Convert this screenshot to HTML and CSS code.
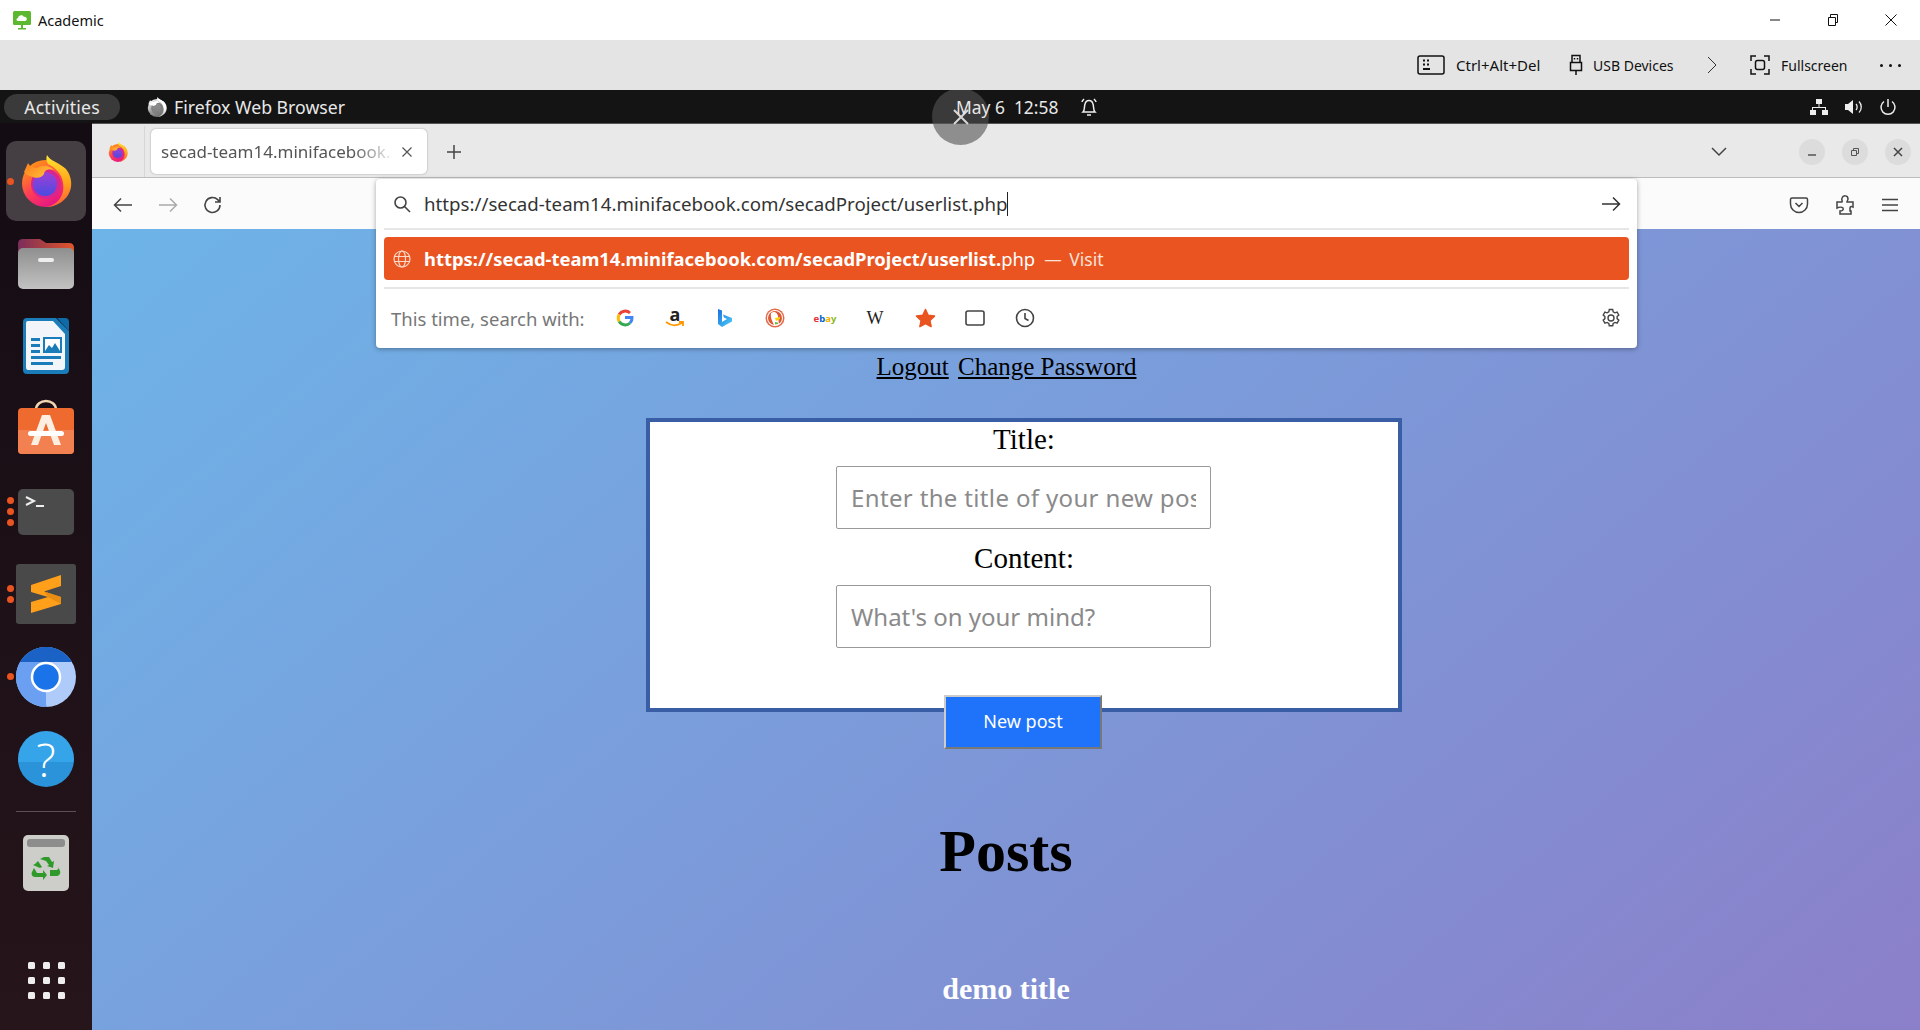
FILE: index.html
```html
<!DOCTYPE html>
<html lang="en">
<head>
    <meta charset="UTF-8">
    <meta name="viewport" content="width=device-width, initial-scale=1.0">
    <title>Academic</title>
    <link rel="stylesheet" href="styles.css">
</head>
<body>
    <!-- shared logo -->
    <svg class="defs" width="0" height="0" aria-hidden="true">
        <defs>
            <linearGradient id="ffBody" x1="0.1" y1="0.2" x2="0.6" y2="1">
                <stop offset="0" stop-color="#ff8a1c"/>
                <stop offset="0.5" stop-color="#ff3d55"/>
                <stop offset="1" stop-color="#e31587"/>
            </linearGradient>
            <linearGradient id="ffTail" x1="0.5" y1="0" x2="0.6" y2="1">
                <stop offset="0" stop-color="#ffe02e"/>
                <stop offset="0.55" stop-color="#ffa51c"/>
                <stop offset="1" stop-color="#ff5a3c"/>
            </linearGradient>
            <linearGradient id="ffGlobe" x1="0.5" y1="0" x2="0.5" y2="1">
                <stop offset="0" stop-color="#a03fd6"/>
                <stop offset="1" stop-color="#4a4be0"/>
            </linearGradient>
            <linearGradient id="ffHead" x1="0" y1="0" x2="1" y2="0.6">
                <stop offset="0" stop-color="#ff7a1c"/>
                <stop offset="1" stop-color="#ffc13a"/>
            </linearGradient>
            <symbol id="firefox" viewBox="0 0 52 52">
                <circle cx="25.500" cy="28.500" r="23.500" fill="url(#ffBody)"/>
                <path fill="url(#ffTail)" d="M27 0c3 6 13 8 19 14 4 5 6 12 5 18-2 12-13 20-25 20 12-2 19-12 17-24-1-10-9-16-15-19-2-3-2-6-1-9z"/>
                <circle cx="26" cy="29" r="15" fill="#d9258f"/>
                <circle cx="25" cy="29" r="12" fill="url(#ffGlobe)"/>
                <path fill="url(#ffHead)" d="M4 17l4-9c2 4 6 5 9 5 6-4 13-2 17 2-6-2-10 1-10 4-2 4-8 5-14 2-2-1-5-2-6-4z"/>
            </symbol>
        </defs>
    </svg>

    <!-- host window title -->
    <header class="titlebar">
        <div class="app-name">
            <svg class="app-icon" width="20" height="20" viewBox="0 0 20 20">
                <rect x="1" y="1" width="18" height="14" rx="1.500" fill="#5cb82e"/>
                <path fill="#fff" d="M6 11c-2 0-2-3 0-3 0-3 5-4 6-1 3-1 4 4 1 4z"/>
                <rect x="9" y="15" width="2" height="3" fill="#5cb82e"/>
                <rect x="6" y="18" width="8" height="1.500" fill="#5cb82e"/>
            </svg>
            <span>Academic</span>
        </div>
        <div class="window-controls">
            <svg width="14" height="14" viewBox="0 0 14 14"><path d="M2 7h10" stroke="#111" fill="none"/></svg>
            <svg width="14" height="14" viewBox="0 0 14 14"><path d="M2.500 4.500h7v8h-7zM4.500 4.500v-3h7v8h-2" stroke="#111" fill="none"/></svg>
            <svg width="14" height="14" viewBox="0 0 14 14"><path d="M1.500 1.500l11 11M12.500 1.500l-11 11" stroke="#111" fill="none"/></svg>
        </div>
    </header>

    <!-- host tools -->
    <div class="vm-toolbar">
        <div class="vm-tool vm-keys">
            <svg width="28" height="20" viewBox="0 0 28 20" fill="none" stroke="#111" stroke-width="1.500">
                <rect x="1" y="1" width="26" height="18" rx="2"/>
                <path d="M6 5.500h2M10 5.500h2M6 9.500h2M10 9.500h2M6 14h7" stroke-width="2"/>
            </svg>
            <span>Ctrl+Alt+Del</span>
        </div>
        <div class="vm-tool vm-usb">
            <svg width="14" height="22" viewBox="0 0 14 22" fill="none" stroke="#111" stroke-width="1.500">
                <path d="M3 1.500h8v7H3zM1.500 8.500h11v8h-11zM7 17v4"/>
                <path d="M5.500 4v1.500M8.500 4v1.500"/>
            </svg>
            <span>USB Devices</span>
        </div>
        <svg class="vm-more" width="12" height="18" viewBox="0 0 12 18"><path d="M2 1l8 8-8 8" stroke="#333" fill="none"/></svg>
        <div class="vm-tool vm-full">
            <svg width="20" height="20" viewBox="0 0 20 20" fill="none" stroke="#111" stroke-width="1.500">
                <path d="M1 6V1h5M14 1h5v5M19 14v5h-5M6 19H1v-5"/>
                <rect x="5.500" y="5.500" width="9" height="9" rx="2"/>
            </svg>
            <span>Fullscreen</span>
        </div>
        <div class="vm-dots"><i></i><i></i><i></i></div>
    </div>

    <div class="desktop">
        <!-- guest top bar -->
        <div class="topbar">
            <div class="topbar-left">
                <span class="activities">Activities</span>
                <svg class="topbar-ff" width="20" height="20"><use href="#firefox"/></svg>
                <span class="topbar-app">Firefox Web Browser</span>
            </div>
            <div class="clock">
                <span>May 6&nbsp;&nbsp;12:58</span>
                <svg width="18" height="20" viewBox="0 0 18 20" fill="none" stroke="#eee" stroke-width="1.500">
                    <path d="M3 15c2-2 1-5 2-8 .5-2 2-3.500 4-3.500s3.500 1.500 4 3.500c1 3 0 6 2 8z"/>
                    <path d="M2 5c0-1 1-2 2-3M16 5c0-1-1-2-2-3M7 18h4" />
                </svg>
            </div>
            <div class="tray">
                <svg width="20" height="18" viewBox="0 0 20 18" fill="#eee">
                    <rect x="7" y="1" width="6" height="5"/><rect x="1" y="12" width="6" height="5"/><rect x="13" y="12" width="6" height="5"/>
                    <path d="M9.500 6h1v3H17v3h-1v-2H4v2H3V9h6.500z"/>
                </svg>
                <svg width="20" height="18" viewBox="0 0 20 18">
                    <path fill="#eee" d="M1 6h3l5-4v14l-5-4H1z"/>
                    <path d="M12 6c1.500 1.500 1.500 4.500 0 6M15 3.500c3 3 3 8 0 11" stroke="#eee" stroke-width="1.300" fill="none"/>
                </svg>
                <svg width="18" height="18" viewBox="0 0 18 18" fill="none" stroke="#eee" stroke-width="1.500">
                    <path d="M9 1v8M5 3.500a7 7 0 1 0 8 0"/>
                </svg>
            </div>
        </div>

        <div class="workspace">
            <!-- guest dock -->
            <nav class="dock">
                <div class="dock-item dock-active">
                    <span class="run-dots"><i></i></span>
                    <svg width="52" height="52"><use href="#firefox"/></svg>
                </div>
                <div class="dock-item">
                    <svg width="56" height="52" viewBox="0 0 56 52">
                        <defs>
                            <linearGradient id="folderTop" x1="0" y1="0" x2="1" y2="0">
                                <stop offset="0" stop-color="#7a2d5a"/>
                                <stop offset="1" stop-color="#e2562a"/>
                            </linearGradient>
                            <linearGradient id="folderFront" x1="0" y1="0" x2="0" y2="1">
                                <stop offset="0" stop-color="#8f8f8f"/>
                                <stop offset="1" stop-color="#c2c2c2"/>
                            </linearGradient>
                        </defs>
                        <path fill="url(#folderTop)" d="M0 6q0-5 5-5h17l6 4h23q5 0 5 5v12H0z"/>
                        <rect y="10" width="56" height="41" rx="5" fill="url(#folderFront)"/>
                        <rect x="20" y="20" width="16" height="4" rx="2" fill="#eee"/>
                    </svg>
                </div>
                <div class="dock-item">
                    <svg width="46" height="56" viewBox="0 0 46 56">
                        <path fill="#1a7cb8" d="M4 0h29l13 13v39q0 4-4 4H4q-4 0-4-4V4q0-4 4-4z"/>
                        <path fill="#f2f6fa" d="M5 3h25l12 13v33q0 3-3 3H5q-2 0-2-3V5q0-2 2-2z"/>
                        <path fill="#0f6aa8" d="M34 0h8q4 0 4 4v9z"/>
                        <path fill="#1a7cb8" d="M8 20h9v3H8zM8 26h9v3H8zM8 32h9v3H8zM8 38h30v3H8zM8 44h22v3H8z"/>
                        <rect x="21" y="20" width="17" height="14" fill="#fff" stroke="#1a7cb8" stroke-width="2"/>
                        <path fill="#1a7cb8" d="M22 33l4-6 3 3 3-5 5 8z"/>
                    </svg>
                </div>
                <div class="dock-item dock-store">
                    <svg width="56" height="56" viewBox="0 0 56 56">
                        <path d="M18 11c0-12 20-12 20 0" stroke="#f2d5b0" stroke-width="2.500" fill="none"/>
                        <rect y="9" width="56" height="46" rx="4" fill="#ee6a2f"/>
                        <path fill="#f28050" d="M0 31h56v20q0 4-4 4H4q-4 0-4-4z"/>
                        <path fill="#fdeee2" d="M24 16h8l11 30h-7l-8-22-8 22h-7z"/>
                        <rect x="10" y="32" width="36" height="5" rx="2.500" fill="#fff"/>
                    </svg>
                </div>
                <div class="dock-item">
                    <span class="run-dots"><i></i><i></i><i></i></span>
                    <svg width="56" height="46" viewBox="0 0 56 46">
                        <rect width="56" height="46" rx="5" fill="#4b4b4b"/>
                        <path d="M8 8l8 4-8 4" stroke="#eee" stroke-width="2" fill="none"/>
                        <path d="M18 17h8" stroke="#eee" stroke-width="2"/>
                    </svg>
                </div>
                <div class="dock-item">
                    <span class="run-dots"><i></i><i></i></span>
                    <svg width="60" height="60" viewBox="0 0 60 60">
                        <rect width="60" height="60" rx="3" fill="#494949"/>
                        <path fill="#ff9f1a" d="M15 21L45 11V22L28 27.500 45 33V40L15 49V38L32 33 15 28z"/>
                        <path fill="#e88c14" d="M28 27.500L45 33V40L32 33z"/>
                    </svg>
                </div>
                <div class="dock-item">
                    <span class="run-dots"><i></i></span>
                    <svg width="60" height="60" viewBox="0 0 60 60">
                        <circle cx="30" cy="30" r="30" fill="#afcbfa"/>
                        <path fill="#1a62c6" d="M4 15A30 30 0 0 1 56 15L30 15z"/>
                        <path fill="#6b9ff2" d="M4 15L30 15 31 60A30 30 0 0 1 4 15z"/>
                        <path fill="#afcbfa" d="M30 30L44 25 30 60z"/>
                        <circle cx="30" cy="30" r="14" fill="#1a73e8" stroke="#fff" stroke-width="2.500"/>
                    </svg>
                </div>
                <div class="dock-item">
                    <span class="help-icon">?</span>
                </div>
                <div class="dock-sep"></div>
                <div class="dock-item dock-trash">
                    <svg width="46" height="56" viewBox="0 0 46 56">
                        <rect width="46" height="56" rx="5" fill="#cdcdc9"/>
                        <rect x="4" y="4" width="38" height="8" rx="3" fill="#8d8d8d"/>
                        <g fill="#2f9a2a">
                            <path d="M17 24l4-2h5l3 5 2-1-1 7-6-2 2-1-3-4-3-1zM15 26l4 6-2 1 0 0-7-3 2-1z"/>
                            <path d="M11 33l3 5h6v-3l4 5-4 5v-3h-8c-3 0-4-3-3-5z"/>
                            <path d="M35 31l2 5c1 2-1 5-3 5h-7v-6h7l2-2z"/>
                        </g>
                    </svg>
                </div>
                <div class="app-grid">
                    <i></i><i></i><i></i><i></i><i></i><i></i><i></i><i></i><i></i>
                </div>
            </nav>

            <!-- firefox window -->
            <div class="browser">
                <div class="tabbar">
                    <div class="tab-favicon">
                        <svg width="20" height="20"><use href="#firefox"/></svg>
                    </div>
                    <div class="tab">
                        <span class="tab-title">secad-team14.minifacebook.</span>
                        <svg width="12" height="12" viewBox="0 0 12 12"><path d="M1.500 1.500l9 9M10.500 1.500l-9 9" stroke="#555" fill="none" stroke-width="1.200"/></svg>
                    </div>
                    <svg class="new-tab" width="16" height="16" viewBox="0 0 16 16"><path d="M8 1v14M1 8h14" stroke="#444" stroke-width="1.500" fill="none"/></svg>
                    <svg class="tab-list" width="16" height="10" viewBox="0 0 16 10"><path d="M1 1l7 7 7-7" stroke="#444" stroke-width="1.500" fill="none"/></svg>
                    <div class="win-buttons">
                        <span class="win-btn"><svg width="10" height="10" viewBox="0 0 10 10"><path d="M1 8h8" stroke="#555" stroke-width="1.500"/></svg></span>
                        <span class="win-btn"><svg width="10" height="10" viewBox="0 0 10 10" fill="none" stroke="#555"><path d="M1.500 3.500h5v5h-5zM3.500 3V1.500h5v5H7"/></svg></span>
                        <span class="win-btn"><svg width="10" height="10" viewBox="0 0 10 10"><path d="M1 1l8 8M9 1l-8 8" stroke="#444" stroke-width="1.500"/></svg></span>
                    </div>
                </div>
                <div class="navbar">
                    <div class="nav-left">
                        <svg width="20" height="16" viewBox="0 0 20 16"><path d="M19 8H2M8 1.500L1.500 8 8 14.500" stroke="#444" stroke-width="1.500" fill="none"/></svg>
                        <svg width="20" height="16" viewBox="0 0 20 16"><path d="M1 8h17M12 1.500L18.500 8 12 14.500" stroke="#aaa" stroke-width="1.500" fill="none"/></svg>
                        <svg width="20" height="20" viewBox="0 0 20 20"><path d="M17 10a7.500 7.500 0 1 1-2.300-5.400L17 7M17 2v5h-5" stroke="#444" stroke-width="1.600" fill="none"/></svg>
                    </div>
                    <div class="nav-right">
                        <svg width="20" height="20" viewBox="0 0 20 20" fill="none" stroke="#444" stroke-width="1.500"><path d="M3 3h14q1.500 0 1.500 1.500V9a8.500 8.500 0 0 1-17 0V4.500Q1.500 3 3 3zM6.500 8L10 11.500 13.500 8"/></svg>
                        <svg width="20" height="22" viewBox="0 0 20 22" fill="none" stroke="#444" stroke-width="1.500"><path d="M2 8h5c1-1-1-2 0-4 1-3 6-3 6 1 0 1-1 2-1 3h6v5c-2-1-3 0-3 1v3h1v3H5v-3c2 0 4-1 3-3-1-1-4-1-6 0z"/></svg>
                        <svg width="18" height="14" viewBox="0 0 18 14" stroke="#444" stroke-width="1.500"><path d="M1 1.500h16M1 7h16M1 12.500h16"/></svg>
                    </div>
                </div>
                <main class="page">
                    <div class="page-links">
                        <a href="#">Logout</a>
                        <a href="#">Change Password</a>
                    </div>
                    <form class="post-form">
                        <div class="post-fields">
                            <label class="field-label" for="title">Title:</label>
                            <input class="field-input title-input" type="text" id="title" placeholder="Enter the title of your new post">
                            <label class="field-label" for="content">Content:</label>
                            <input class="field-input" type="text" id="content" placeholder="What's on your mind?">
                        </div>
                        <button class="post-button" type="button">New post</button>
                    </form>
                    <h1 class="posts-heading">Posts</h1>
                    <h3 class="post-title">demo title</h3>
                </main>

                <!-- address bar dropdown -->
                <div class="urlbar">
                    <div class="url-input">
                        <svg width="18" height="18" viewBox="0 0 18 18" fill="none" stroke="#444" stroke-width="1.600"><circle cx="7.500" cy="7.500" r="5.500"/><path d="M11.500 11.500l5.500 5.500"/></svg>
                        <span class="url-text">https://secad-team14.minifacebook.com/secadProject/userlist.php</span><span class="caret"></span>
                        <svg class="url-go" width="20" height="16" viewBox="0 0 20 16"><path d="M1 8h17M12 1.500L18.500 8 12 14.500" stroke="#333" stroke-width="1.500" fill="none"/></svg>
                    </div>
                    <div class="url-result">
                        <svg width="18" height="18" viewBox="0 0 18 18" fill="none" stroke="#fbd9c8" stroke-width="1.200"><circle cx="9" cy="9" r="8"/><ellipse cx="9" cy="9" rx="3.500" ry="8"/><path d="M1 6.500h16M1 11.500h16"/></svg>
                        <span class="result-url"><b>https://secad-team14.minifacebook.com/secadProject/userlist.</b>php</span>
                        <span class="result-action">— Visit</span>
                    </div>
                    <div class="url-engines">
                        <span class="engines-label">This time, search with:</span>
                        <div class="engine-list">
                            <span class="engine">
                                <svg width="18" height="18" viewBox="0 0 18 18" fill="none" stroke-width="3">
                                    <path d="M3.200 5.500A7 7 0 0 1 14 4" stroke="#ea4335"/>
                                    <path d="M3.200 5.500a7 7 0 0 0 0 7" stroke="#fbbc05"/>
                                    <path d="M3.200 12.500A7 7 0 0 0 14 14" stroke="#34a853"/>
                                    <path d="M14 14a7 7 0 0 0 2-5.500H9" stroke="#4285f4"/>
                                </svg>
                            </span>
                            <span class="engine engine-amazon">
                                <b>a</b>
                                <svg width="20" height="8" viewBox="0 0 20 8"><path d="M1 1c5 4 11 4 16 1M14 1h4v4" stroke="#f90" stroke-width="1.800" fill="none"/></svg>
                            </span>
                            <span class="engine">
                                <svg width="16" height="20" viewBox="0 0 16 20">
                                    <defs><linearGradient id="bingB" x1="0" y1="0" x2="1" y2="1"><stop offset="0" stop-color="#1b6fe0"/><stop offset="1" stop-color="#4fd0f5"/></linearGradient></defs>
                                    <path fill="url(#bingB)" d="M1 1l4 1.500V14l5-3-3-1.500-1-3L15 10v3.500L5 19l-4-3z"/>
                                </svg>
                            </span>
                            <span class="engine">
                                <svg width="20" height="20" viewBox="0 0 20 20">
                                    <circle cx="10" cy="10" r="9.500" fill="#e2694a"/>
                                    <circle cx="10" cy="10" r="8" fill="#fff"/>
                                    <circle cx="10" cy="10" r="7" fill="#de5833"/>
                                    <path fill="#fff" d="M6 5c3-2 6-1 7 3l1 9H9C7 13 5 9 6 5z"/>
                                    <path fill="#fdd20a" d="M10 10l5-1v2l-4 2z"/>
                                    <path fill="#65bc46" d="M10 14l3 .5V16l-3 .5z"/>
                                </svg>
                            </span>
                            <span class="engine engine-ebay"><i class="eb-e">e</i><i class="eb-b">b</i><i class="eb-a">a</i><i class="eb-y">y</i></span>
                            <span class="engine engine-wiki">W</span>
                            <span class="engine">
                                <svg width="21" height="20" viewBox="0 0 21 20"><path fill="#e95420" stroke="#e95420" stroke-linejoin="round" stroke-width="1.500" d="M10.500 1.500l2.700 5.800 6.300.8-4.600 4.300 1.200 6.200-5.600-3.100-5.600 3.100 1.200-6.200L1.500 8.100l6.300-.8z"/></svg>
                            </span>
                            <span class="engine">
                                <svg width="20" height="16" viewBox="0 0 20 16"><rect x="1" y="1" width="18" height="14" rx="2" fill="none" stroke="#444" stroke-width="1.600"/></svg>
                            </span>
                            <span class="engine">
                                <svg width="20" height="20" viewBox="0 0 20 20" fill="none" stroke="#444" stroke-width="1.600"><circle cx="10" cy="10" r="8.500"/><path d="M10 5v5.500l3.500 2"/></svg>
                            </span>
                        </div>
                        <svg class="engine-gear" width="20" height="20" viewBox="0 0 20 20" fill="none" stroke="#444" stroke-width="1.400">
                            <path d="M8.300 1.500h3.400l.5 2.300 1.700 1 2.200-.7 1.700 2.900-1.700 1.600v2l1.700 1.600-1.700 2.900-2.200-.7-1.700 1-.5 2.300H8.300l-.5-2.300-1.700-1-2.200.7-1.700-2.900 1.700-1.600v-2L2.200 7l1.700-2.900 2.200.7 1.700-1z"/>
                            <circle cx="10" cy="10" r="3"/>
                        </svg>
                    </div>
                </div>
            </div>
        </div>

        <!-- remote session close handle -->
        <div class="session-close">
            <svg width="20" height="20" viewBox="0 0 20 20"><path d="M3 3l14 14M17 3L3 17" stroke="#d8d8d8" stroke-width="2"/></svg>
        </div>
    </div>
</body>
</html>
```

FILE: styles.css
```css
* {
    box-sizing: border-box;
}
body {
    margin: 0;
    height: 100vh;
    display: flex;
    flex-direction: column;
    overflow: hidden;
    font-family: "Noto Sans", sans-serif;
    background-color: #fff;
}
.defs {
    position: absolute;
}
svg {
    display: block;
    flex: none;
}

/* host window */
.titlebar {
    height: 40px;
    display: flex;
    align-items: center;
    justify-content: space-between;
    padding: 0 22px 0 12px;
    background-color: #fff;
}
.app-name {
    display: flex;
    align-items: center;
    gap: 6px;
    font-size: 14.5px;
    color: #111;
}
.window-controls {
    display: flex;
    gap: 44px;
}
.vm-toolbar {
    height: 50px;
    display: flex;
    align-items: center;
    padding-left: 1417px;
    background-color: #e4e4e4;
    font-size: 14px;
    color: #111;
}
.vm-tool {
    display: flex;
    align-items: center;
}
.vm-keys {
    gap: 11px;
    width: 152px;
    font-size: 15px;
}
.vm-usb {
    gap: 10px;
    width: 137px;
}
.vm-full {
    gap: 11px;
    width: 130px;
    margin-left: 32px;
}
.vm-dots {
    display: flex;
    gap: 6px;
}
.vm-dots i {
    width: 3px;
    height: 3px;
    border-radius: 50%;
    background-color: #111;
}

/* guest desktop */
.desktop {
    flex: 1;
    position: relative;
    display: flex;
    flex-direction: column;
    overflow: hidden;
}
.topbar {
    height: 33px;
    position: relative;
    display: flex;
    align-items: center;
    justify-content: space-between;
    background-color: #141414;
    color: #e8e8e8;
    font-size: 17.7px;
}
.topbar-left {
    display: flex;
    align-items: center;
    padding-left: 4px;
}
.activities {
    width: 116px;
    height: 26px;
    line-height: 26px;
    border-radius: 13px;
    text-align: center;
    letter-spacing: 0.2px;
    background-color: #3a3a3a;
}
.topbar-ff {
    margin-left: 27px;
    filter: grayscale(1) brightness(1.5);
}
.topbar-app {
    margin-left: 7px;
}
.clock {
    position: absolute;
    z-index: 2;
    left: 956px;
    top: 0;
    height: 33px;
    display: flex;
    align-items: center;
    gap: 22px;
    font-size: 17.4px;
}
.tray {
    display: flex;
    align-items: center;
    gap: 15px;
    padding-right: 23px;
}
.workspace {
    flex: 1;
    display: flex;
    min-height: 0;
}

/* dock */
.dock {
    width: 92px;
    display: flex;
    flex-direction: column;
    align-items: center;
    padding-top: 17px;
    background: linear-gradient(#140c13, #26151b);
}
.dock-item {
    position: relative;
    width: 80px;
    height: 82.6px;
    display: flex;
    align-items: center;
    justify-content: center;
}
.dock-active::before {
    content: "";
    position: absolute;
    left: 0;
    top: 1px;
    width: 80px;
    height: 80px;
    border-radius: 10px;
    background-color: #453e43;
}
.dock-active svg {
    position: relative;
}
.dock-store svg {
    margin-bottom: 5px;
}
.run-dots {
    position: absolute;
    left: 1px;
    top: 0;
    bottom: 0;
    display: flex;
    flex-direction: column;
    justify-content: center;
    gap: 4px;
}
.run-dots i {
    width: 7px;
    height: 7px;
    border-radius: 50%;
    background-color: #e95420;
}
.help-icon {
    width: 56px;
    height: 56px;
    border-radius: 50%;
    background: linear-gradient(#35a4e8 56%, #2a93da 56%);
    font-family: "Open Sans", sans-serif;
    font-size: 46px;
    font-weight: 300;
    line-height: 56px;
    text-align: center;
    color: #fff;
}
.dock-sep {
    width: 60px;
    height: 1px;
    margin-top: 10px;
    background-color: #5a5054;
}
.dock-trash {
    margin-top: 10px;
}
.app-grid {
    margin-top: 58px;
    display: grid;
    grid-template-columns: repeat(3, 7px);
    gap: 8px;
}
.app-grid i {
    width: 7px;
    height: 7px;
    border-radius: 1.5px;
    background-color: #eee;
}

/* firefox */
.browser {
    flex: 1;
    position: relative;
    display: flex;
    flex-direction: column;
    min-width: 0;
}
.tabbar {
    height: 55px;
    display: flex;
    align-items: center;
    padding-top: 2px;
    background-color: #e9e9e9;
    border-top: 1px solid #555;
    border-bottom: 1px solid #bdbdbd;
}
.tab-favicon {
    width: 53px;
    align-self: stretch;
    display: flex;
    align-items: center;
    justify-content: center;
    border-right: 1px solid #d6d6d6;
}
.tab {
    width: 276px;
    height: 45px;
    margin-left: 6px;
    display: flex;
    align-items: center;
    gap: 6px;
    padding: 0 14px 0 10px;
    border-radius: 5px;
    background-color: #fff;
    box-shadow: 0 0 2px rgba(0, 0, 0, 0.35);
    font-size: 17px;
    color: #555;
}
.tab-title {
    flex: 1;
    white-space: nowrap;
    -webkit-mask-image: linear-gradient(to right, #000 82%, transparent 100%);
    mask-image: linear-gradient(to right, #000 82%, transparent 100%);
}
.new-tab {
    margin-left: 19px;
}
.tab-list {
    margin-left: 1249px;
}
.win-buttons {
    display: flex;
    gap: 17px;
    margin-left: 72px;
}
.win-btn {
    width: 26px;
    height: 26px;
    border-radius: 50%;
    display: flex;
    align-items: center;
    justify-content: center;
    background-color: #dcdcdc;
}
.navbar {
    height: 51px;
    display: flex;
    align-items: center;
    justify-content: space-between;
    padding: 2px 21px 0 21px;
    background-color: #fbfbfb;
}
.nav-left {
    display: flex;
    align-items: center;
    gap: 25px;
}
.nav-right {
    display: flex;
    align-items: center;
    gap: 26px;
}

/* page */
.page {
    flex: 1;
    padding-top: 122px;
    background: linear-gradient(140deg, #6db4e8, #8b7fc9);
    font-family: "Liberation Serif", serif;
    text-align: center;
    color: #000;
}
.page-links {
    height: 67px;
    padding-left: 1px;
    font-size: 25px;
    line-height: 32px;
}
.page-links a {
    color: #000;
    margin: 0 1.5px;
}
.post-form {
    width: 756px;
    margin-left: 554px;
}
.post-fields {
    height: 294px;
    border: 4px solid #3a5ea6;
    background-color: #fff;
}
.field-label {
    display: block;
    font-size: 29px;
    line-height: 34px;
}
.field-input {
    display: block;
    width: 375px;
    height: 63px;
    margin: 10px 0 12px 186px;
    padding: 0 14px;
    border: 1px solid #999;
    border-radius: 2px;
    font-family: "Noto Sans", sans-serif;
    font-size: 24px;
    color: #333;
}
.title-input {
    letter-spacing: 0.35px;
}
.field-input::placeholder {
    color: #8a8a8a;
    opacity: 1;
}
.post-button {
    display: block;
    width: 158px;
    height: 54px;
    margin: -17px 0 0 298px;
    padding-bottom: 4px;
    border: 2px outset #ccc;
    background-color: #1e73fa;
    font-family: "Noto Sans", sans-serif;
    font-size: 18px;
    color: #fff;
}
.posts-heading {
    margin: 68px 0 0;
    font-size: 60px;
    line-height: 68px;
}
.post-title {
    margin: 86px 0 0;
    font-size: 30px;
    line-height: 36px;
    color: #fff;
}

/* urlbar dropdown */
.urlbar {
    position: absolute;
    left: 284px;
    top: 56px;
    width: 1261px;
    height: 169px;
    padding: 0 8px;
    background-color: #fff;
    border-radius: 4px;
    box-shadow: 0 1px 5px rgba(0, 0, 0, 0.35);
}
.url-input {
    height: 51px;
    display: flex;
    align-items: center;
    padding: 0 8px 0 9px;
    border-bottom: 2px solid #e6e6e6;
    font-size: 18.7px;
    color: #333;
}
.url-text {
    margin-left: 13px;
    white-space: nowrap;
}
.caret {
    width: 1px;
    height: 24px;
    background-color: #222;
}
.url-go {
    margin-left: auto;
}
.url-result {
    height: 43px;
    margin-top: 7px;
    display: flex;
    align-items: center;
    gap: 13px;
    padding-left: 9px;
    border-radius: 4px;
    background-color: #e95420;
    font-size: 18.4px;
    color: #fff;
}
.result-url {
    white-space: nowrap;
}
.result-url b {
    font-weight: 700;
}
.result-action {
    margin-left: -4px;
    font-size: 17.5px;
    word-spacing: 3px;
    color: #fde2d6;
}
.url-engines {
    height: 60px;
    margin-top: 7px;
    display: flex;
    align-items: center;
    padding-left: 7px;
    border-top: 2px solid #e6e6e6;
}
.engines-label {
    width: 209px;
    font-size: 18.5px;
    color: #777;
    white-space: nowrap;
}
.engine-list {
    display: flex;
}
.engine {
    width: 50px;
    height: 30px;
    display: flex;
    flex-direction: column;
    align-items: center;
    justify-content: center;
}
.engine-amazon {
    font-size: 18px;
    line-height: 14px;
    color: #222;
}
.engine-ebay {
    flex-direction: row;
    font-size: 9.5px;
    font-weight: 700;
}
.engine-ebay i {
    font-style: normal;
}
.eb-e {
    color: #e53238;
}
.eb-b {
    color: #0064d2;
}
.eb-a {
    color: #f5af02;
}
.eb-y {
    color: #86b817;
}
.engine-wiki {
    font-family: "Liberation Serif", serif;
    font-size: 18px;
    color: #222;
}
.engine-gear {
    margin-left: auto;
    margin-right: 8px;
}

/* remote session close handle */
.session-close {
    position: absolute;
    left: 932px;
    top: -2px;
    width: 57px;
    height: 57px;
    display: flex;
    align-items: center;
    justify-content: center;
    border-radius: 50%;
    background-color: rgba(84, 84, 84, 0.61);
}
```
